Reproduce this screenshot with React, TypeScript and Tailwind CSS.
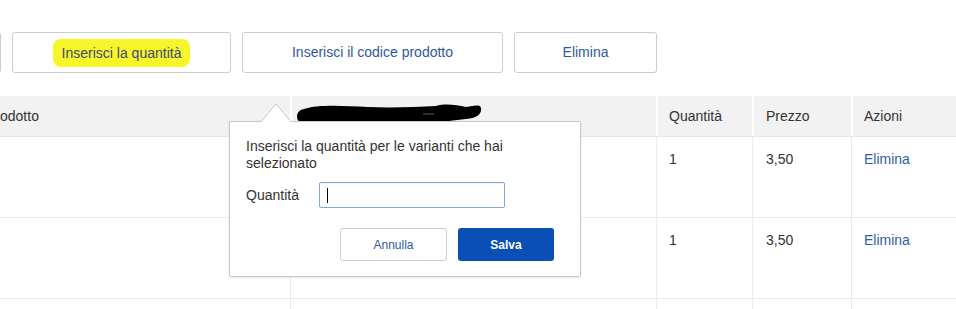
import React from "react";

const rows = [
  { qty: "1", price: "3,50" },
  { qty: "1", price: "3,50" },
];

function Toolbar() {
  return (
    <div className="flex items-center gap-[11px] pl-[12px]">
      <button className="ml-[-111px] h-[41px] w-[100px] rounded-[3px] border border-[#cccccc] bg-white" />
      <button className="flex h-[41px] w-[219px] items-center justify-center rounded-[3px] border border-[#cccccc] bg-white text-[14px] text-[#3c4a6e]">
        <span className="rounded-[8px] bg-[#f6f62a] px-[9px] py-[6px] leading-[16px]">
          Inserisci la quantità
        </span>
      </button>
      <button className="h-[41px] w-[261px] rounded-[3px] border border-[#cccccc] bg-white text-[14px] text-[#30579c]">
        Inserisci il codice prodotto
      </button>
      <button className="h-[41px] w-[143px] rounded-[3px] border border-[#cccccc] bg-white text-[14px] text-[#30579c]">
        Elimina
      </button>
    </div>
  );
}

function Table() {
  const cols = "grid grid-cols-[317px_366px_96px_99px_1fr]";
  return (
    <div className="mt-[23px] ml-[-27px] w-[1010px] text-[14px] text-[#333333]">
      <div className={`${cols} h-[41px] border-b border-[#e6e6e6] bg-[#f2f2f2]`}>
        <div className="flex items-center pl-[13px]">Prodotto</div>
        <div className="border-l-2 border-white" />
        <div className="flex items-center border-l-2 border-white pl-[11px]">Quantità</div>
        <div className="flex items-center border-l-2 border-white pl-[12px]">Prezzo</div>
        <div className="flex items-center border-l-2 border-white pl-[11px]">Azioni</div>
      </div>
      {rows.map((r, i) => (
        <div key={i} className={`${cols} h-[81px] border-b border-[#ebebeb]`}>
          <div />
          <div className="border-l border-[#ebebeb]" />
          <div className="border-l border-[#ebebeb] pl-[12px] pt-[14px] leading-[17px]">{r.qty}</div>
          <div className="border-l border-[#ebebeb] pl-[13px] pt-[14px] leading-[17px]">{r.price}</div>
          <div className="border-l border-[#ebebeb] pl-[12px] pt-[14px] leading-[17px] text-[#2f5ea8]">
            Elimina
          </div>
        </div>
      ))}
      <div className={`${cols} h-[12px]`}>
        <div />
        <div className="border-l border-[#ebebeb]" />
        <div className="border-l border-[#ebebeb]" />
        <div className="border-l border-[#ebebeb]" />
        <div className="border-l border-[#ebebeb]" />
      </div>
    </div>
  );
}

function Popover() {
  return (
    <div className="absolute left-[229px] top-[121px] h-[156px] w-[352px] rounded-[2px] border border-[#c8c8c8] bg-white px-[16px] pt-[16px] text-[14px] text-[#333333] shadow-[0_1px_3px_rgba(0,0,0,0.08)]">
      <svg className="absolute left-[31px] top-[-19px]" width="30" height="20" viewBox="0 0 30 20">
        <polygon points="0,19.5 15,1 30,19.5" fill="white" />
        <polyline points="0,19 15,0.7 30,19" fill="none" stroke="#c8c8c8" strokeWidth="1" />
      </svg>
      <p className="leading-[17px]">Inserisci la quantità per le varianti che hai selezionato</p>
      <div className="mt-[10px] flex items-center">
        <label className="w-[73px]">Quantità</label>
        <div className="flex h-[26px] w-[186px] items-center rounded-[2px] border border-[#86a6d8] pl-[7px] shadow-[inset_0_1px_1px_rgba(0,0,0,0.05)]">
          <span className="h-[15px] w-px bg-black" />
        </div>
      </div>
      <div className="mt-[20px] flex justify-end gap-[11px] pr-[10px]">
        <button className="h-[33px] w-[107px] rounded-[3px] border border-[#cccccc] bg-white text-[12px] text-[#30579c]">
          Annulla
        </button>
        <button className="h-[33px] w-[96px] rounded-[3px] bg-[#0a4fb5] text-[12px] font-bold text-white">
          Salva
        </button>
      </div>
    </div>
  );
}

function Redaction() {
  return (
    <svg className="absolute left-[296px] top-[103px]" width="186" height="27" viewBox="0 0 186 27">
      <path
        d="M8,6 C22,1 50,3 72,4 C96,5 120,4 140,3 C150,0 160,2 170,4 C178,3 184,1 185,5 C186,11 181,15 170,16 C150,18 130,21 110,23 C80,26 50,27 25,25 C10,24 1,20 1,14 C1,10 3,7 8,6 Z"
        fill="#000"
      />
      <line x1="127" y1="11" x2="138" y2="11" stroke="#777" strokeWidth="0.8" />
    </svg>
  );
}

export default function App() {
  return (
    <div
      className="relative h-[309px] w-[956px] overflow-hidden bg-white pt-[32px]"
      style={{ fontFamily: '"Liberation Sans", Arial, sans-serif' }}
    >
      <Toolbar />
      <Table />
      <Redaction />
      <Popover />
    </div>
  );
}
